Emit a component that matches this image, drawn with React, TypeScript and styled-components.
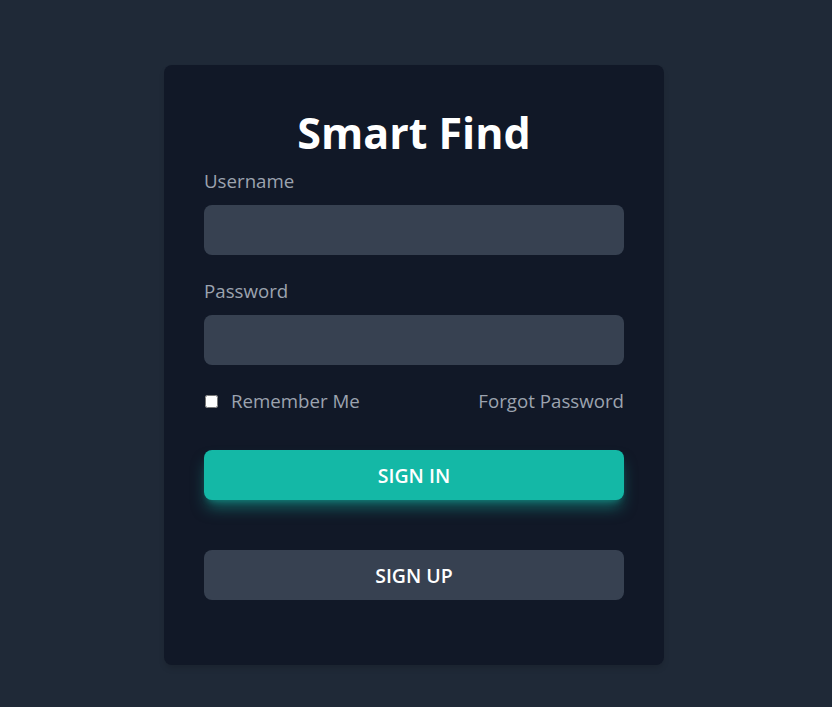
import styled, { createGlobalStyle } from "styled-components";

const GlobalStyle = createGlobalStyle`
  html, body {
    margin: 0;
    padding: 0;
    background-color: #1f2937;
    font-family: "Open Sans", "Noto Sans", sans-serif;
  }
  * {
    box-sizing: border-box;
  }
`;

const Page = styled.div`
  min-height: 707px;
  display: flex;
  justify-content: center;
  padding: 65px 4px 0 0;
`;

const Card = styled.form`
  width: 500px;
  height: 600px;
  background-color: #111827;
  border-radius: 8px;
  padding: 40px 40px;
  box-shadow: 0 4px 6px -1px rgba(0, 0, 0, 0.15);
  display: flex;
  flex-direction: column;
`;

const Title = styled.h1`
  margin: 0 0 6px;
  text-align: center;
  color: #ffffff;
  font-size: 43px;
  font-weight: 700;
  line-height: 56px;
`;

const Field = styled.div`
  display: flex;
  flex-direction: column;
  margin-bottom: 22px;
`;

const Label = styled.label`
  color: #9ca3af;
  font-size: 18.7px;
  line-height: 28px;
  margin-bottom: 10px;
`;

const Input = styled.input`
  height: 50px;
  width: 100%;
  border: none;
  border-radius: 8px;
  background-color: #374151;
  color: #ffffff;
  font-size: 18px;
  padding: 0 16px;
  outline: none;
`;

const OptionsRow = styled.div`
  display: flex;
  align-items: center;
  justify-content: space-between;
  color: #9ca3af;
  font-size: 18.7px;
  line-height: 28px;
  margin-top: 0;
  margin-bottom: 35px;
`;

const Remember = styled.label`
  display: flex;
  align-items: center;
`;

const Checkbox = styled.input`
  width: 13px;
  height: 13px;
  margin: 0 13px 0 1px;
`;

const Forgot = styled.a`
  color: #9ca3af;
  text-decoration: none;
`;

const Button = styled.button<{ $primary?: boolean }>`
  height: 50px;
  width: 100%;
  border: none;
  border-radius: 8px;
  font-family: inherit;
  font-size: 19.5px;
  font-weight: 600;
  color: #ffffff;
  text-transform: uppercase;
  background-color: ${(p) => (p.$primary ? "#14b8a6" : "#374151")};
  box-shadow: ${(p) =>
    p.$primary
      ? "0 10px 15px -3px rgba(20, 184, 166, 0.5), 0 4px 6px -4px rgba(20, 184, 166, 0.5)"
      : "none"};
  margin-bottom: ${(p) => (p.$primary ? "50px" : "0")};
  cursor: pointer;
`;

export default function App() {
  return (
    <>
      <GlobalStyle />
      <Page>
        <Card onSubmit={(e) => e.preventDefault()}>
          <Title>Smart Find</Title>
          <Field>
            <Label htmlFor="username">Username</Label>
            <Input id="username" type="text" />
          </Field>
          <Field>
            <Label htmlFor="password">Password</Label>
            <Input id="password" type="password" />
          </Field>
          <OptionsRow>
            <Remember>
              <Checkbox type="checkbox" />
              Remember Me
            </Remember>
            <Forgot href="#">Forgot Password</Forgot>
          </OptionsRow>
          <Button $primary type="submit">
            Sign In
          </Button>
          <Button type="button">Sign Up</Button>
        </Card>
      </Page>
    </>
  );
}
